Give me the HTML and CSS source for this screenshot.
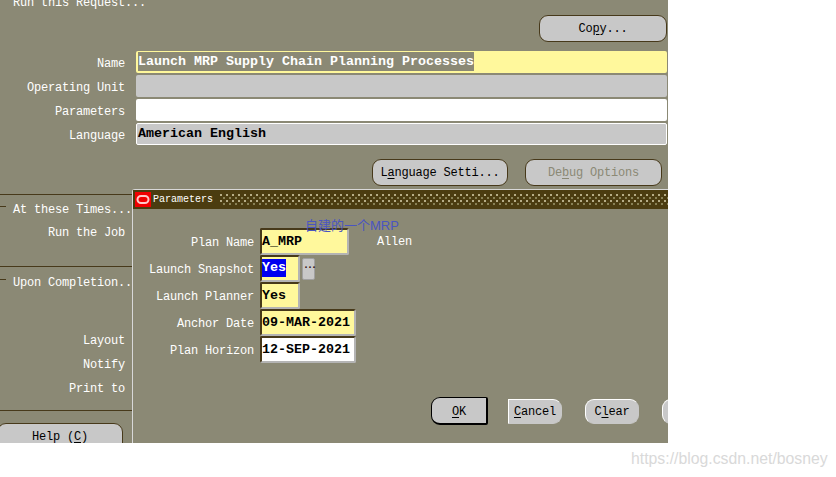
FILE: index.html
```html
<!DOCTYPE html>
<html lang="en">
<head>
<meta charset="utf-8">
<title>Parameters</title>
<link rel="stylesheet" href="styles.css">
</head>
<body>
<main class="app">
  <header class="head">
    <div class="run-title">Run this Request...</div>
    <button class="btn copy">Co<u>p</u>y...</button>
  </header>
  <section class="form">
    <label class="lbl">Name</label><div class="field yellow"><span class="sel-grey">Launch MRP Supply Chain Planning Processes</span></div>
    <label class="lbl">Operating Unit</label><div class="field grey"></div>
    <label class="lbl">Parameters</label><div class="field white"></div>
    <label class="lbl">Language</label><div class="field grey outlined">American English</div>
  </section>
  <div class="actions">
    <button class="btn lang">L<u>a</u>nguage Setti...</button>
    <button class="btn debug">De<u>b</u>ug Options</button>
  </div>
  <section class="side">
    <div class="rule"></div>
    <div class="sec-title first"><i class="tick"></i>At these Times...</div>
    <div class="side-lbl job">Run the Job</div>
    <div class="rule second"></div>
    <div class="sec-title"><i class="tick"></i>Upon Completion..</div>
    <div class="side-lbl layout">Layout</div>
    <div class="side-lbl">Notify</div>
    <div class="side-lbl">Print to</div>
    <div class="rule third"></div>
    <button class="btn help">Help (<u>C</u>)</button>
  </section>

  <section class="dialog">
    <div class="titlebar">
      <svg class="logo" width="16" height="15" viewBox="0 0 16 15"><rect width="16" height="15" fill="#f00000"/><rect x="2.5" y="4" width="11" height="7" rx="3.5" fill="none" stroke="#ffc8c8" stroke-width="2"/></svg>
      <span class="dlg-name">Parameters</span>
      <span class="dots"></span>
    </div>
    <div class="params">
      <label class="plbl">Plan Name</label>
      <div class="pfield y w-name">A_MRP</div>
      <label class="plbl">Launch Snapshot</label>
      <div class="snap"><div class="pfield y w-short"><span class="sel-blue">Yes</span></div><button class="lov">...</button></div>
      <label class="plbl">Launch Planner</label>
      <div class="pfield y w-short">Yes</div>
      <label class="plbl">Anchor Date</label>
      <div class="pfield y w-date">09-MAR-2021</div>
      <label class="plbl">Plan Horizon</label>
      <div class="pfield wh w-date">12-SEP-2021</div>
    </div>
    <div class="allen">Allen</div>
    <div class="note">自建的一个MRP</div>
    <div class="dlg-actions">
      <button class="btn ok"><u>O</u>K</button>
      <button class="btn light cancel"><u>C</u>ancel</button>
      <button class="btn light clear">C<u>l</u>ear</button>
      <button class="btn light extra"></button>
    </div>
  </section>
</main>
<div class="watermark">https://blog.csdn.net/bosney</div>
</body>
</html>
```
FILE: styles.css
```css
html, body { margin: 0; padding: 0; background: #fff; }
body { width: 836px; height: 477px; overflow: hidden; position: relative; }
.app {
  position: relative; width: 668px; height: 443px; overflow: hidden;
  background: #8b8975; color: #fff;
  font: 12px/14px "Liberation Mono", monospace; letter-spacing: -.2px;
}
.head { height: 51px; position: relative; }
.run-title { padding: 0 0 0 13px; position: relative; top: -4px; height: 14px; }
.btn {
  display: block; margin: 0; padding: 1px 0 0; background: #c8c8c8; color: #000;
  border: 1px solid #47391a; border-radius: 9px;
  font: 12px/14px "Liberation Mono", monospace; letter-spacing: -.2px; text-align: center;
}
.btn u { text-underline-offset: 2px; }
.copy { position: absolute; left: 539px; top: 15px; width: 128px; height: 27px; padding: 0; }
.form {
  display: grid; grid-template-columns: 125px 531px; column-gap: 11px;
  row-gap: 2px; grid-auto-rows: 22px;
}
.lbl { text-align: right; line-height: 27px; }
.field {
  height: 22px; border-radius: 2px; box-sizing: border-box; letter-spacing: 0;
  font: bold 13.33px/20px "Liberation Mono", monospace; color: #000; padding-left: 2px;
}
.yellow { background: #fff89c; }
.grey { background: #c8c8c8; }
.white { background: #fff; }
.outlined { border: 1px solid #fff; padding-left: 1px; }
.sel-grey { display: inline-block; height: 19px; background: #8b8975; color: #fff; margin-top: 1px; line-height: 19px; vertical-align: top; }
.actions { display: flex; padding: 14px 0 0 372px; gap: 17px; }
.lang { width: 136px; height: 27px; border-radius: 9px; }
.debug { width: 137px; height: 27px; color: #8b8975; border-radius: 9px; }
.side { width: 132px; margin-top: 8px; }
.rule { height: 1px; background: #47391a; }
.third { margin-top: 14px; }
.sec-title { position: relative; padding-left: 13px; height: 14px; margin-top: 9px; white-space: nowrap; }
.sec-title.first { margin-top: 8px; }
.tick { position: absolute; left: 0; top: 3px; width: 6px; height: 1px; background: #47391a; }
.side-lbl { width: 125px; text-align: right; height: 14px; margin-top: 10px; }
.job { margin: 9px 0 26px; }
.sec-title + .side-lbl.layout { margin-top: 44px; }
.help { width: 126px; height: 30px; margin: 12px 0 0 -3px; border-radius: 9px; padding: 0 0 2px; }
.dialog {
  position: absolute; left: 132px; top: 189px; width: 536px; height: 254px;
  border-left: 1px solid #d8d8d8; border-top: 1px solid #d8d8d8; border-radius: 3px 0 0 0; box-sizing: border-box;
  background: #8b8975;
}
.titlebar { height: 19px; background: #4b3c10; display: flex; align-items: center; padding-left: 2px; }
.logo { flex: none; margin-top: -1px; }
.dlg-name { font-size: 10px; letter-spacing: 0; margin-left: 2px; width: 67px; flex: none; line-height: 12px; }
.dots {
  flex: 1; height: 12px;
  background-image: radial-gradient(circle at 1px 1px, #b9b08a 0.7px, transparent 1px), radial-gradient(circle at 1px 1px, #8b8458 0.7px, transparent 1px);
  background-size: 6px 6px, 6px 6px; background-position: 0 0, 3px 3px;
}
.params {
  display: grid; grid-template-columns: 121px 1fr; column-gap: 6px;
  padding-top: 19px; grid-auto-rows: 27px; align-items: center;
}
.plbl { text-align: right; white-space: nowrap; padding-top: 2px; }
.pfield {
  box-sizing: border-box; height: 27px; background: #fff89c; color: #000; letter-spacing: 0;
  border: 2px solid; border-color: #47391a #b4b4b4 #b4b4b4 #47391a; border-radius: 2px;
  font: bold 13.33px/23px "Liberation Mono", monospace; padding-left: 0;
}
.wh { background: #fff; }
.w-name { width: 89px; }
.w-short { width: 40px; }
.w-date { width: 96px; }
.snap { display: flex; align-items: center; gap: 2px; }
.sel-blue { display: inline-block; background: #0000f0; color: #fff; line-height: 18px; height: 18px; vertical-align: top; margin-top: 2px; }
.lov {
  width: 13px; height: 22px; padding: 0 0 6px; border: 1px solid #a0a0a0; border-radius: 2px;
  background: #c8c8c8; color: #301010; font: bold 10px/10px "Liberation Mono", monospace; letter-spacing: -2px; text-align: center;
}
.allen { position: absolute; left: 244px; top: 45px; }
.note {
  position: absolute; left: 172px; top: 27px; color: #4a55c0; white-space: nowrap; letter-spacing: 0;
  font: 13px/18px "Liberation Sans", "Noto Sans CJK SC", sans-serif;
}
.dlg-actions { position: absolute; left: 298px; top: 207px; display: flex; align-items: center; }
.ok { width: 57px; height: 28px; padding-top: 2px; border: 1px solid #000; border-right-width: 2px; border-bottom-width: 2px; border-radius: 9px 2px 2px 9px; margin-right: 20px; }
.light { height: 25px; padding-top: 2px; border: 1px solid #fff; border-radius: 9px; border-right-color: #c8c8c8; border-bottom-color: #c8c8c8; }
.cancel { width: 54px; border-radius: 0 9px 9px 0; margin-right: 23px; }
.clear { width: 54px; margin-right: 23px; }
.extra { width: 54px; flex: none; }
.watermark {
  position: absolute; left: 631px; top: 449px; color: #d9d9d9; white-space: nowrap;
  font: 15.8px/19px "Liberation Sans", sans-serif;
}
```
